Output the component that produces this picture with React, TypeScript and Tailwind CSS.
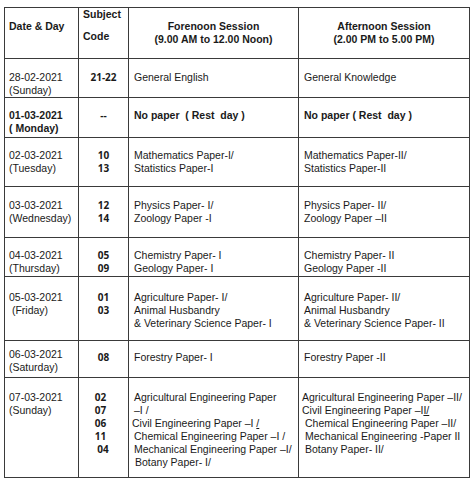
import type { ReactNode } from "react";

const TEXT = "font-['Liberation_Sans',Arial,sans-serif] text-[10.5px] leading-[13px] text-[#1a1a1a]";
const CODE = "font-['Open_Sans',sans-serif] font-bold text-[10px] leading-[13px] text-[#1a1a1a] text-center";
const DASH = "\u2013";

type Row = {
  h: string;
  pt: string;
  datePt?: string;
  date: ReactNode;
  code: ReactNode;
  fore: ReactNode;
  after: ReactNode;
  bold?: boolean;
};

const lines = (items: ReactNode[]) =>
  items.map((t, i) => (
    <div key={i} className="whitespace-pre">
      {t}
    </div>
  ));

const rows: Row[] = [
  {
    h: "h-[39px]",
    pt: "pt-[12px]",
    date: lines(["28-02-2021", "(Sunday)"]),
    code: lines(["21-22"]),
    fore: lines(["General English"]),
    after: lines(["General Knowledge"]),
  },
  {
    h: "h-[40px]",
    pt: "pt-[11px]",
    bold: true,
    date: lines(["01-03-2021", "( Monday)"]),
    code: lines(["--"]),
    fore: lines(["No paper  ( Rest  day )"]),
    after: lines(["No paper ( Rest  day )"]),
  },
  {
    h: "h-[49px]",
    pt: "pt-[11px]",
    date: lines(["02-03-2021", "(Tuesday)"]),
    code: lines(["10", "13"]),
    fore: lines(["Mathematics Paper-I/", "Statistics Paper-I"]),
    after: lines(["Mathematics Paper-II/", "Statistics Paper-II"]),
  },
  {
    h: "h-[51px]",
    pt: "pt-[12px]",
    date: lines(["03-03-2021", "(Wednesday)"]),
    code: lines(["12", "14"]),
    fore: lines(["Physics Paper- I/", "Zoology Paper -I"]),
    after: lines(["Physics Paper- II/", `Zoology Paper ${DASH}II`]),
  },
  {
    h: "h-[39px]",
    pt: "pt-[11px]",
    date: lines(["04-03-2021", "(Thursday)"]),
    code: lines(["05", "09"]),
    fore: lines(["Chemistry Paper- I", "Geology Paper- I"]),
    after: lines(["Chemistry Paper- II", "Geology Paper -II"]),
  },
  {
    h: "h-[64px]",
    pt: "pt-[14px]",
    date: lines(["05-03-2021", " (Friday)"]),
    code: lines(["01", "03"]),
    fore: lines(["Agriculture Paper- I/", "Animal Husbandry", "& Veterinary Science Paper- I"]),
    after: lines(["Agriculture Paper- II/", "Animal Husbandry", "& Veterinary Science Paper- II"]),
  },
  {
    h: "h-[37px]",
    pt: "pt-[10px]",
    datePt: "pt-[7px]",
    date: lines(["06-03-2021", "(Saturday)"]),
    code: lines(["08"]),
    fore: lines(["Forestry Paper- I"]),
    after: lines(["Forestry Paper -II"]),
  },
  {
    h: "h-[100px]",
    pt: "pt-[13px]",
    date: lines(["07-03-2021", "(Sunday)"]),
    code: (
      <div className="pr-[6px]">
        {lines(["02", "07", "06", "11", <span className="pl-[5px]">04</span>])}
      </div>
    ),
    fore: lines([
      "Agricultural Engineering Paper",
      `${DASH}I /`,
      <span className="-ml-[2px]">
        Civil Engineering Paper {DASH}I <span className="underline">/</span>
      </span>,
      `Chemical Engineering Paper ${DASH}I /`,
      `Mechanical Engineering Paper ${DASH}I/`,
      <span className="pl-[1px]">Botany Paper- I/</span>,
    ]),
    after: lines([
      <span className="-ml-[2px]">Agricultural Engineering Paper {DASH}II/</span>,
      <span className="-ml-[2px]">
        Civil Engineering Paper {DASH}I<span className="underline">I/</span>
      </span>,
      <span className="pl-[1px]">Chemical Engineering Paper {DASH}II/</span>,
      <span className="pl-[1px]">Mechanical Engineering -Paper II</span>,
      <span className="pl-[1px]">Botany Paper- II/</span>,
    ]),
  },
];

export default function App() {
  return (
    <div className="w-[474px] h-[485px] bg-white pt-[7px] pl-[4px]">
      <div className="w-[466px] border-l border-t border-[#3a3a3a]">
        {/* header */}
        <div className={`flex h-[51px] border-b border-[#3a3a3a] font-bold ${TEXT}`}>
          <div className="w-[74px] border-r border-[#3a3a3a] pl-[4px] pt-[12px]">Date &amp; Day</div>
          <div className="w-[50px] border-r border-[#3a3a3a] pl-[4px]">
            <div>Subject</div>
            <div className="mt-[9px]">Code</div>
          </div>
          <div className="w-[170px] border-r border-[#3a3a3a] pt-[12px] text-center">
            <div>Forenoon Session</div>
            <div>(9.00 AM to 12.00 Noon)</div>
          </div>
          <div className="w-[171px] border-r border-[#3a3a3a] pt-[12px] text-center">
            <div>Afternoon Session</div>
            <div>(2.00 PM to 5.00 PM)</div>
          </div>
        </div>

        {rows.map((r, i) => (
          <div key={i} className={`flex ${r.h} border-b border-[#3a3a3a]`}>
            <div
              className={`w-[74px] border-r border-[#3a3a3a] pl-[4px] ${r.datePt ?? r.pt} ${TEXT} ${
                r.bold ? "font-bold" : ""
              }`}
            >
              {r.date}
            </div>
            <div className={`w-[50px] border-r border-[#3a3a3a] ${r.pt} ${CODE}`}>{r.code}</div>
            <div
              className={`w-[170px] border-r border-[#3a3a3a] pl-[5px] ${r.pt} ${TEXT} ${
                r.bold ? "font-bold" : ""
              }`}
            >
              {r.fore}
            </div>
            <div
              className={`w-[171px] border-r border-[#3a3a3a] pl-[5px] ${r.pt} ${TEXT} ${
                r.bold ? "font-bold" : ""
              }`}
            >
              {r.after}
            </div>
          </div>
        ))}
      </div>
    </div>
  );
}
